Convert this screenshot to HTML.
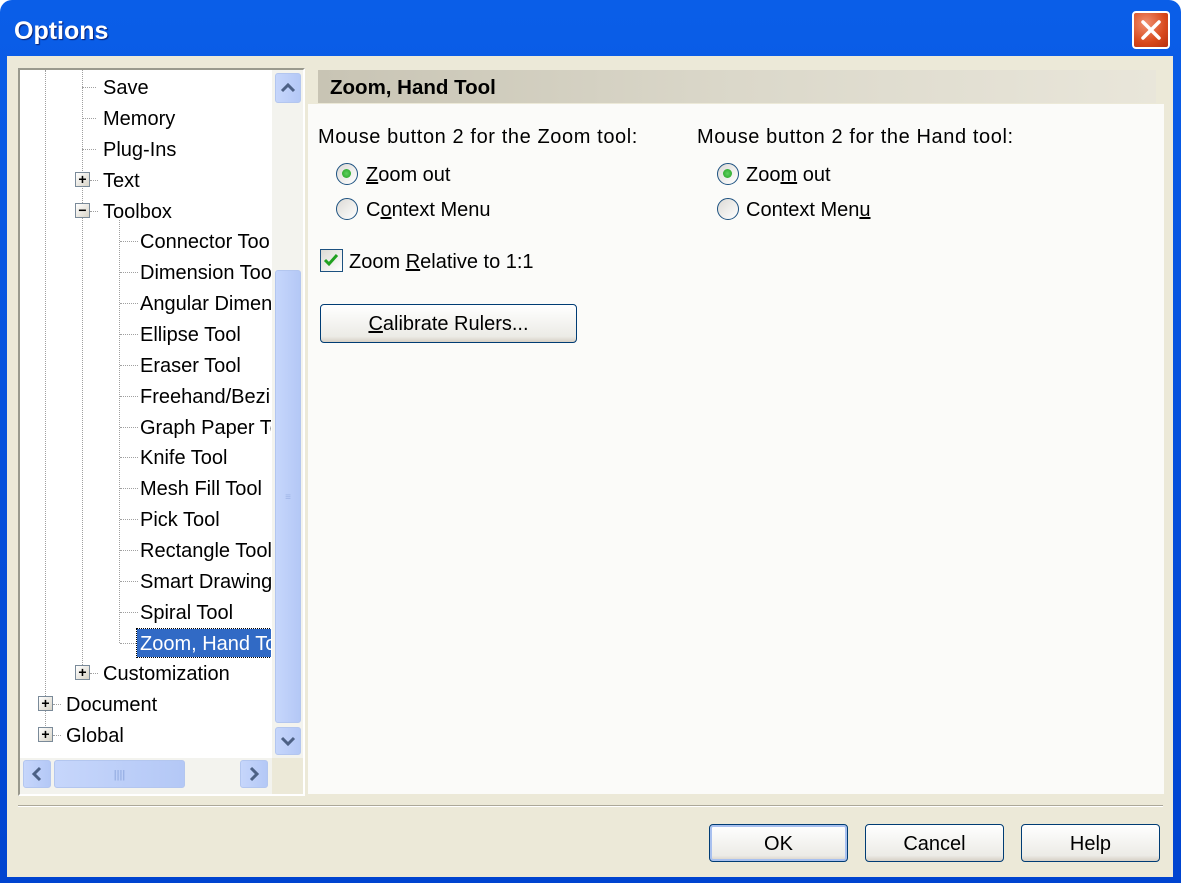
<!DOCTYPE html>
<html><head><style>
*{margin:0;padding:0;box-sizing:border-box}
body{width:1181px;height:883px;overflow:hidden;background:#fff;font-family:"Liberation Sans",Tahoma,sans-serif;font-size:20px;color:#000;position:relative}
.abs{position:absolute}
.win{left:0;top:0;width:1181px;height:883px;background:linear-gradient(#0a5ee8,#0044d0);border-radius:12px 12px 0 0}
.title{left:14px;top:17px;color:#fff;font-weight:bold;font-size:25px;text-shadow:1px 1px 1px #0a1e6e}
.body{left:7px;top:56px;width:1166px;height:821px;background:#ece9d8}
.close{left:1132px;top:11px;width:38px;height:38px;border:2px solid #fff;border-radius:4px;background:radial-gradient(circle at 35% 30%,#f09070,#d8491c 60%,#b83010)}
.tree{left:18px;top:68px;width:287px;height:728px;border:2px solid #9a9a8e;border-right-color:#fff;border-bottom-color:#fff;background:#fff}
.it{position:absolute;white-space:nowrap;line-height:24px;top:0}
.vl{position:absolute;border-left:1px dotted #a0a0a0;width:0}
.hl{position:absolute;border-top:1px dotted #a0a0a0;height:0}
.pb{position:absolute;width:15px;height:15px;border:1px solid #7a8a99;background:linear-gradient(135deg,#fff,#d8d4c8);font-size:14px;line-height:12px;text-align:center;font-weight:bold}
.sbtn{position:absolute;background:linear-gradient(90deg,#c6d6fb,#b4c8f6);border:1px solid #b3c6ef;border-radius:3px;color:#4d6185;text-align:center}
.btn{position:absolute;border:1px solid #003c74;border-radius:4px;background:linear-gradient(#fff,#ecebe6 85%,#d6d0c5);text-align:center;line-height:38px;font-size:20px}
.radio{position:absolute;width:22px;height:22px;border-radius:50%;border:1.5px solid #1c5180;background:linear-gradient(135deg,#dcdad5,#fff)}
.dot{position:absolute;left:5px;top:5px;width:9px;height:9px;border-radius:50%;background:radial-gradient(#5fd05f,#21a121)}
u{text-decoration:underline}
.t{margin-top:2px}
</style></head><body>
<div class="abs win"></div>
<div class="abs title">Options</div>
<div class="abs close"><svg width="34" height="34" viewBox="0 0 34 34"><path d="M9 9L25 25M25 9L9 25" stroke="#fff" stroke-width="3.5" stroke-linecap="round"/></svg></div>
<div class="abs body"></div>

<div class="abs tree">
 <div class="vl" style="left:25px;top:0;height:668px"></div>
 <div class="vl" style="left:62px;top:0;height:603px"></div>
 <div class="vl" style="left:99px;top:150px;height:423px"></div>
 <div class="hl" style="left:62px;top:17px;width:14px"></div>
 <div class="hl" style="left:62px;top:48px;width:14px"></div>
 <div class="hl" style="left:62px;top:79px;width:14px"></div>
 <div class="hl" style="left:70px;top:110px;width:8px"></div>
 <div class="hl" style="left:70px;top:141px;width:8px"></div>
 <div class="hl" style="left:70px;top:603px;width:8px"></div>
 <div class="hl" style="left:33px;top:634px;width:8px"></div>
 <div class="hl" style="left:33px;top:665px;width:8px"></div>
 <div class="pb" style="left:55px;top:102px">+</div>
 <div class="pb" style="left:55px;top:133px">−</div>
 <div class="pb" style="left:55px;top:595px">+</div>
 <div class="pb" style="left:18px;top:626px">+</div>
 <div class="pb" style="left:18px;top:657px">+</div>
 <div class="it" style="left:83px;top:6px">Save</div>
 <div class="it" style="left:83px;top:37px">Memory</div>
 <div class="it" style="left:83px;top:68px">Plug-Ins</div>
 <div class="it" style="left:83px;top:99px">Text</div>
 <div class="it" style="left:83px;top:130px">Toolbox</div>
 <div style="position:absolute;left:100px;top:150px;width:151px;height:440px;overflow:hidden">
  <div class="hl" style="left:0;top:21px;width:18px"></div>
  <div class="hl" style="left:0;top:52px;width:18px"></div>
  <div class="hl" style="left:0;top:83px;width:18px"></div>
  <div class="hl" style="left:0;top:114px;width:18px"></div>
  <div class="hl" style="left:0;top:145px;width:18px"></div>
  <div class="hl" style="left:0;top:176px;width:18px"></div>
  <div class="hl" style="left:0;top:207px;width:18px"></div>
  <div class="hl" style="left:0;top:237px;width:18px"></div>
  <div class="hl" style="left:0;top:268px;width:18px"></div>
  <div class="hl" style="left:0;top:299px;width:18px"></div>
  <div class="hl" style="left:0;top:330px;width:18px"></div>
  <div class="hl" style="left:0;top:361px;width:18px"></div>
  <div class="hl" style="left:0;top:392px;width:18px"></div>
  <div class="hl" style="left:0;top:423px;width:18px"></div>
  <div class="it" style="left:20px;top:10px">Connector Tool</div>
  <div class="it" style="left:20px;top:41px">Dimension Tool</div>
  <div class="it" style="left:20px;top:72px">Angular Dimension</div>
  <div class="it" style="left:20px;top:103px">Ellipse Tool</div>
  <div class="it" style="left:20px;top:134px">Eraser Tool</div>
  <div class="it" style="left:20px;top:165px">Freehand/Bezier</div>
  <div class="it" style="left:20px;top:196px">Graph Paper Tool</div>
  <div class="it" style="left:20px;top:226px">Knife Tool</div>
  <div class="it" style="left:20px;top:257px">Mesh Fill Tool</div>
  <div class="it" style="left:20px;top:288px">Pick Tool</div>
  <div class="it" style="left:20px;top:319px">Rectangle Tool</div>
  <div class="it" style="left:20px;top:350px">Smart Drawing</div>
  <div class="it" style="left:20px;top:381px">Spiral Tool</div>
  <div class="it" style="left:17px;top:409px;background:#316ac5;color:#fff;padding:3px 3px 1px;width:140px;outline:1px dotted #000">Zoom, Hand Tool</div>
 </div>
 <div class="it" style="left:83px;top:592px">Customization</div>
 <div class="it" style="left:46px;top:623px">Document</div>
 <div class="it" style="left:46px;top:654px">Global</div>
 <div style="position:absolute;left:252px;top:0;width:31px;height:688px;background:#f3f3ee"></div>
 <div class="sbtn" style="left:255px;top:3px;width:26px;height:30px"><svg width="24" height="28" viewBox="0 0 24 28"><path d="M6 17L12 11L18 17" stroke="#4d6185" stroke-width="3" fill="none"/></svg></div>
 <div class="sbtn" style="left:255px;top:200px;width:26px;height:453px;line-height:453px;font-size:10px;color:#9eb4e6">≡</div>
 <div class="sbtn" style="left:255px;top:657px;width:26px;height:28px"><svg width="24" height="26" viewBox="0 0 24 26"><path d="M6 10L12 16L18 10" stroke="#4d6185" stroke-width="3" fill="none"/></svg></div>
 <div style="position:absolute;left:0;top:688px;width:252px;height:36px;background:#f3f3ee"></div>
 <div class="sbtn" style="left:3px;top:690px;width:28px;height:28px"><svg width="26" height="26" viewBox="0 0 26 26"><path d="M16 7L10 13L16 19" stroke="#4d6185" stroke-width="3" fill="none"/></svg></div>
 <div class="sbtn" style="left:34px;top:690px;width:131px;height:28px;font-size:11px;line-height:28px;color:#8aa4dc">||||</div>
 <div class="sbtn" style="left:220px;top:690px;width:28px;height:28px"><svg width="26" height="26" viewBox="0 0 26 26"><path d="M10 7L16 13L10 19" stroke="#4d6185" stroke-width="3" fill="none"/></svg></div>
 <div style="position:absolute;left:252px;top:688px;width:31px;height:36px;background:#ece9d8"></div>
</div>

<div class="abs" style="left:308px;top:68px;width:856px;height:726px;background:#fbfbf9"></div>
<div class="abs" style="left:308px;top:68px;width:856px;height:36px;background:#ece9d8"></div>
<div class="abs" style="left:318px;top:70px;width:838px;height:33px;background:linear-gradient(90deg,#c8c4b4,#dbd8ca 50%,#e9e6da);font-weight:bold;font-size:20.5px;line-height:35px;padding-left:12px">Zoom, Hand Tool</div>

<div class="abs" style="left:318px;top:126px;letter-spacing:0.6px">Mouse button 2 for the Zoom tool:</div>
<div class="radio" style="left:336px;top:163px"><div class="dot"></div></div>
<div class="abs" style="left:366px;top:164px"><u>Z</u>oom out</div>
<div class="radio" style="left:336px;top:198px"></div>
<div class="abs" style="left:366px;top:199px">C<u>o</u>ntext Menu</div>

<div class="abs" style="left:697px;top:126px;letter-spacing:0.6px">Mouse button 2 for the Hand tool:</div>
<div class="radio" style="left:717px;top:163px"><div class="dot"></div></div>
<div class="abs" style="left:746px;top:164px">Zoo<u>m</u> out</div>
<div class="radio" style="left:717px;top:198px"></div>
<div class="abs" style="left:746px;top:199px">Context Men<u>u</u></div>

<div class="abs" style="left:320px;top:249px;width:23px;height:23px;border:1.5px solid #1c5180;background:linear-gradient(135deg,#dcdad5,#fff)"><svg width="20" height="20" viewBox="0 0 20 20"><path d="M4 10L8 14L16 5" stroke="#21a121" stroke-width="3" fill="none"/></svg></div>
<div class="abs" style="left:349px;top:251px">Zoom <u>R</u>elative to 1:1</div>

<div class="btn" style="left:320px;top:304px;width:257px;height:39px"><u>C</u>alibrate Rulers...</div>

<div class="abs" style="left:18px;top:805px;width:1145px;height:2px;border-top:1px solid #aca899;border-bottom:1px solid #fff"></div>
<div class="btn" style="left:709px;top:824px;width:139px;height:38px;box-shadow:inset 0 0 0 2px #a8c0ef">OK</div>
<div class="btn" style="left:865px;top:824px;width:139px;height:38px">Cancel</div>
<div class="btn" style="left:1021px;top:824px;width:139px;height:38px">Help</div>
</body></html>
